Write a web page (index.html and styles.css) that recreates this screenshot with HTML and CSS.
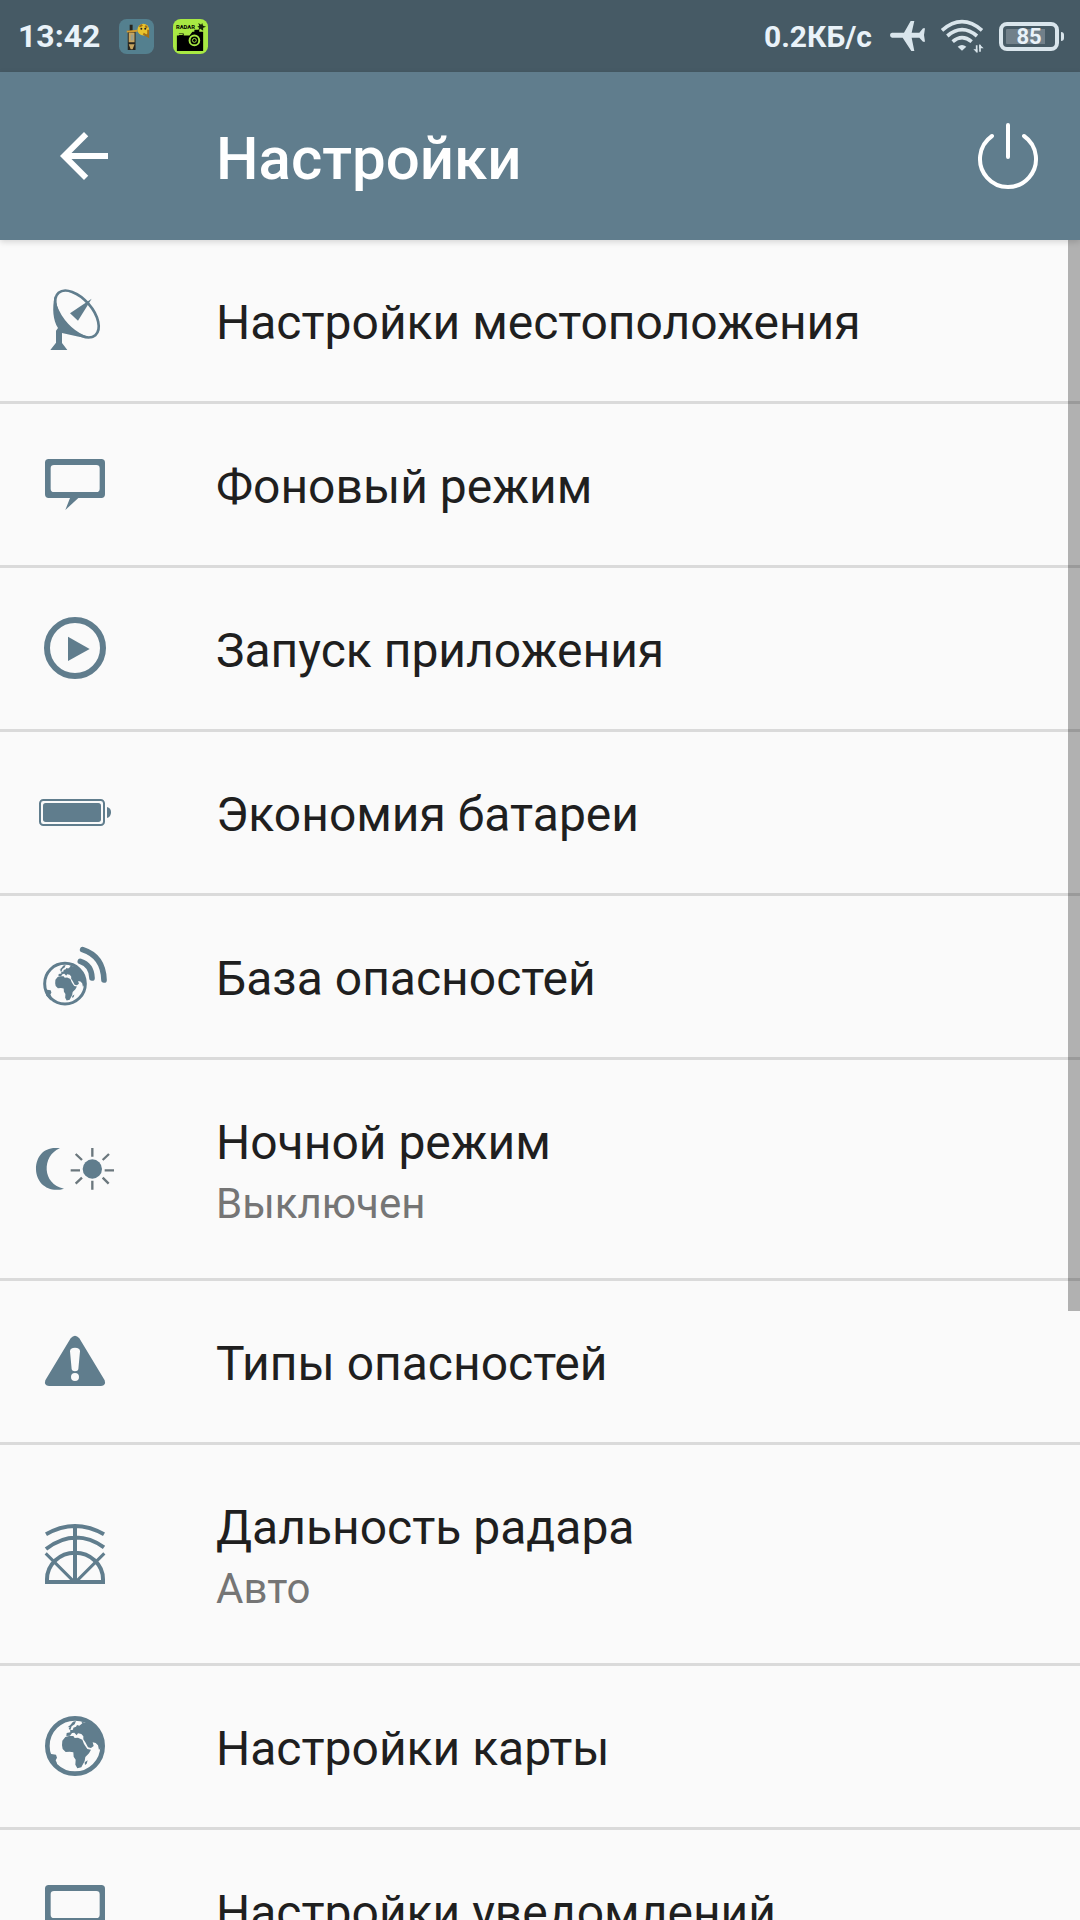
FILE: index.html
```html
<!DOCTYPE html>
<html lang="ru">
<head>
  <meta charset="UTF-8" />
  <meta name="viewport" content="width=device-width, initial-scale=1.0"/>
  <title>Настройки</title>
  <link rel="stylesheet" href="styles.css">
</head>
<body>
  <!-- ICONS -->
  <svg class="sprite" aria-hidden="true">
    <symbol id="bubble" viewBox="45 15 240 240">
      <path fill-rule="evenodd" d="M86 57H244Q255 57 255 68V163Q255 174 244 174H175L136 210L150 174H86Q75 174 75 163V68Q75 57 86 57ZM102 75Q92 75 92 85V146Q92 156 102 156H229Q239 156 239 146V85Q239 75 229 75Z"/>
    </symbol>
    <g id="land">
      <path d="M184 95L187 100L178 107L171 105L168 110L160 113L159 119L150 121L151 127L140 129L139 138L150 137L156 129L163 128L170 136L174 130L184 132L190 139L190 148L196 157L204 172L213 174L221 168L218 157L227 159L234 166L237 180L246 168L242 135L222 104Z"/>
      <path d="M136 141L147 138L160 138L164 144L174 143L187 149L192 162L202 177L213 179L207 190L196 201L194 213L184 232L172 235L166 224L167 209L161 200L160 187L149 185L137 186L128 177L126 166L127 152Z"/>
      <path d="M203 211L200 221L195 225L194 217ZM151 105L159 95L168 93L164 103L155 109L151 120L146 117L149 111L143 112Z"/>
      <path d="M84 188L94 192L108 194L111 203L107 211L111 220L108 235L90 215Z"/>
    </g>
  </svg>

  <!-- STATUS BAR -->
  <div class="status-bar">
    <span class="clock">13:42</span>
    <svg class="app-icon" viewBox="0 0 36 36">
      <rect width="36" height="36" rx="8" fill="#54808f"/>
      <path d="M11 6h3v7h-3zM9 12h8v20H9z" fill="#26251f"/>
      <path d="M10 14h6v10h-6zM10 26h6l-2 5h-2z" fill="#c6a45f"/>
      <path d="M12 16h3v6h-3z" fill="#9b9f8c"/>
      <path d="M8 13l11-1" stroke="#d19b31" stroke-width="2"/>
      <circle cx="25" cy="11" r="6" fill="#e8c32c"/>
      <path d="M25 15l5 3v-7M21 8l3-2M27 7l2 2" fill="none" stroke="#a66f12" stroke-width="2"/>
      <circle cx="23" cy="10" r="1" fill="#222"/><circle cx="27" cy="10" r="1" fill="#222"/>
    </svg>
    <svg class="app-icon" viewBox="0 0 36 36">
      <rect width="36" height="36" rx="8" fill="#a8e943"/>
      <text x="3" y="10" class="app-text">RADAR</text>
      <path d="M26 4l3 2 1-2 1 3 3 1-3 1 0 3-3-2-2 2 1-3-2-1 2-1z" fill="#17220a"/>
      <path d="M4 17h2v-2h5v2h6l3-4h2v-2h5v2h4v20H4z"/>
      <path d="M5 16h5" stroke="#a8e943"/>
      <circle cx="22" cy="22" r="5" fill="none" stroke="#a8e943" stroke-width="2"/>
      <circle cx="22" cy="22" r="2" fill="none" stroke="#a8e943"/>
    </svg>
    <div class="status-right">
      <span class="speed">0.2КБ/с</span>
      <svg class="plane" viewBox="450 60 108 96">
        <path d="M456 98H492L512 63H523L515 98H538L549 85H555L552 105L555 125H549L538 113H515L523 153H514L488 113H456Q450 112 450 105Q450 99 456 98Z"/>
      </svg>
      <svg class="wifi" viewBox="600 60 135 105">
        <g fill="none" stroke-width="11">
          <path d="M606 94Q666 42 726 94M622 111Q666 73 711 111M638 128Q666 104 695 128"/>
          <path d="M710 139V160M720 137V158" stroke-width="5"/>
        </g>
        <path d="M653 143Q666 133 679 143L666 155ZM700 151H712V162ZM718 136L731 148H718Z"/>
      </svg>
      <div class="battery">85</div>
    </div>
  </div>

  <!-- HEADER -->
  <header class="toolbar">
    <button class="icon-btn" aria-label="Назад">
      <svg viewBox="0 0 24 24"><path d="M20 11H7.83l5.59-5.59L12 4l-8 8 8 8 1.41-1.41L7.83 13H20z"/></svg>
    </button>
    <h1>Настройки</h1>
    <button class="icon-btn" aria-label="Выход">
      <svg class="line" viewBox="0 0 72 72"><path d="M36 5V37M20 16A28 28 0 1 0 52 16"/></svg>
    </button>
  </header>

  <!-- SETTINGS -->
  <main class="content">
    <ul class="list">
      <li><a href="#" class="row">
        <svg class="icon" viewBox="45 32 240 240">
          <path d="M104 77C96 115 99 150 114 173L108 181V217L91 239H142L126 218V188C157 195 190 203 219 204Q160 190 125 135Q105 100 104 77Z"/>
          <ellipse cx="171" cy="131" rx="84" ry="46" transform="rotate(49 171 131)" fill="none" stroke="#607d8d" stroke-width="8"/>
          <path d="M150 129L215 85L174 151Z"/>
        </svg>
        <span class="label">Настройки местоположения</span>
      </a></li>
      <li><a href="#" class="row">
        <svg class="icon"><use href="#bubble"/></svg>
        <span class="label">Фоновый режим</span>
      </a></li>
      <li><a href="#" class="row">
        <svg class="icon" viewBox="45 27 240 240">
          <circle cx="165" cy="144" r="84" fill="none" stroke="#607d8d" stroke-width="18"/>
          <path d="M144 110L209 147L144 183Z"/>
        </svg>
        <span class="label">Запуск приложения</span>
      </a></li>
      <li><a href="#" class="row">
        <svg class="icon" viewBox="45 519 240 240">
          <rect x="60" y="600" width="192" height="75" rx="10" fill="none" stroke="#607d8d" stroke-width="6"/>
          <rect x="69" y="609" width="174" height="57" rx="8"/>
          <path d="M261 621Q273 624 273 637Q273 651 261 654Z"/>
        </svg>
        <span class="label">Экономия батареи</span>
      </a></li>
      <li><a href="#" class="row">
        <svg class="icon" viewBox="45 20 240 240">
          <circle cx="135" cy="160" r="61" fill="none" stroke="#607d8d" stroke-width="9"/>
          <use href="#land" transform="translate(11 34) scale(.75)"/>
          <path d="M181 93Q215 104 216 143M188 58Q250 78 252 149" fill="none" stroke="#607d8d" stroke-width="17" stroke-linecap="round"/>
        </svg>
        <span class="label">База опасностей</span>
      </a></li>
      <li><a href="#" class="row">
        <svg class="icon" viewBox="45 -3 240 240">
          <path d="M120 55C74 47 48 78 48 117C48 160 86 190 132 176C66 164 64 77 120 55Z"/>
          <circle cx="217" cy="117" r="29"/>
          <path d="M217 54V80M217 152V179M152 121H180M254 121H282M167 72L186 90M267 72L248 90M167 161L186 143M266 161L248 143" stroke="#6b777d" stroke-width="7"/>
        </svg>
        <span class="label">Ночной режим <small>Выключен</small></span>
      </a></li>
      <li><a href="#" class="row">
        <svg class="icon" viewBox="45 36 240 240">
          <path fill-rule="evenodd" d="M152 85Q165 70 178 85L254 211Q259 227 243 228H87Q71 227 76 211ZM150 124Q150 113 165 113Q180 113 180 124L175 178Q174 184 165 184Q156 184 155 178ZM165 189a12 12 0 0 0 0 24a12 12 0 0 0 0 -24Z"/>
        </svg>
        <span class="label">Типы опасностей</span>
      </a></li>
      <li><a href="#" class="row">
        <svg class="icon" viewBox="45 42 240 240">
          <g fill="none" stroke="#607d8d" stroke-width="12">
            <path d="M78 103Q165 53 252 103M78 147Q165 81 252 142M81 246V238A84 80 0 0 1 249 238V246M75 246H255M165 76V246"/>
            <path d="M77 160L158 241M253 160L172 241" stroke-width="9"/>
          </g>
        </svg>
        <span class="label">Дальность радара <small>Авто</small></span>
      </a></li>
      <li><a href="#" class="row">
        <svg class="icon" viewBox="45 51 240 240">
          <circle cx="165" cy="168" r="83" fill="none" stroke="#607d8d" stroke-width="14"/>
          <use href="#land"/>
        </svg>
        <span class="label">Настройки карты</span>
      </a></li>
      <li><a href="#" class="row">
        <svg class="icon"><use href="#bubble"/></svg>
        <span class="label">Настройки уведомлений</span>
      </a></li>
    </ul>
    <div class="scrollbar"></div>
  </main>
</body>
</html>
```
FILE: styles.css
```css
* { margin: 0; padding: 0; box-sizing: border-box; }

body {
  height: 100vh;
  display: flex;
  flex-direction: column;
  font-family: Roboto, sans-serif;
  background-color: #fafafa;
  color: #1f1f1f;
  overflow: hidden;
}

.sprite {
  position: absolute;
  width: 0;
  height: 0;
}

.status-bar {
  height: 72px;
  flex-shrink: 0;
  display: flex;
  align-items: center;
  gap: 19px;
  padding: 0 21px 0 18px;
  background-color: #465a65;
  color: #e9f2f9;
  font-weight: bold;
}

.clock {
  font-size: 32px;
}

.app-icon {
  width: 35px;
  height: 35px;
}

.app-text {
  font-size: 6px;
  font-weight: bold;
}

.status-right {
  display: flex;
  align-items: center;
  gap: 14px;
  margin-left: auto;
}

.speed {
  font-size: 30px;
  margin-right: 4px;
}

.plane,
.wifi {
  fill: #d9e5ec;
  stroke: none;
}

.plane {
  width: 36px;
  height: 32px;
}

.wifi {
  width: 45px;
  height: 35px;
}

.wifi g {
  stroke: #d9e5ec;
}

.battery {
  position: relative;
  width: 60px;
  height: 29px;
  border: 4px solid #d9e5ec;
  border-radius: 8px;
  background: linear-gradient(to right, #71808a 85%, transparent 85%) content-box;
  padding: 3px;
  font-size: 22px;
  line-height: 16px;
  text-align: center;
}

.battery::after {
  content: "";
  position: absolute;
  right: -9px;
  top: 6px;
  width: 3px;
  height: 9px;
  border-radius: 0 3px 3px 0;
  background-color: #d9e5ec;
}

.toolbar {
  height: 168px;
  flex-shrink: 0;
  display: flex;
  align-items: center;
  padding: 0 36px 0 48px;
  background-color: #607d8d;
  color: #fff;
  box-shadow: 0 2px 6px rgba(0, 0, 0, 0.15);
  z-index: 1;
}

.toolbar h1 {
  flex: 1;
  margin-left: 96px;
  padding-top: 4px;
  font-size: 60px;
  font-weight: 500;
}

.icon-btn {
  width: 72px;
  height: 72px;
  background: none;
  border: none;
  cursor: pointer;
}

.icon-btn svg {
  display: block;
  width: 72px;
  height: 72px;
  fill: #fff;
}

.icon-btn .line {
  fill: none;
  stroke: #fff;
  stroke-width: 4;
  stroke-linecap: round;
}

.content {
  position: relative;
  flex: 1;
  min-height: 0;
  overflow: hidden;
}

.list {
  list-style: none;
}

.row {
  display: flex;
  align-items: center;
  padding-left: 35px;
  border-bottom: 3px solid #dadada;
  color: inherit;
  text-decoration: none;
}

.icon {
  width: 80px;
  height: 80px;
  flex-shrink: 0;
  fill: #607d8d;
}

.label {
  padding: 55px 0 50px;
  margin-left: 101px;
  font-size: 48px;
  line-height: 56px;
}

.label small {
  display: block;
  padding-top: 8px;
  margin-bottom: -1px;
  font-size: 42px;
  line-height: 50px;
  color: #757575;
}

.scrollbar {
  position: absolute;
  top: 0;
  right: 0;
  width: 12px;
  height: 1071px;
  background-color: rgba(0, 0, 0, 0.29);
}
```
